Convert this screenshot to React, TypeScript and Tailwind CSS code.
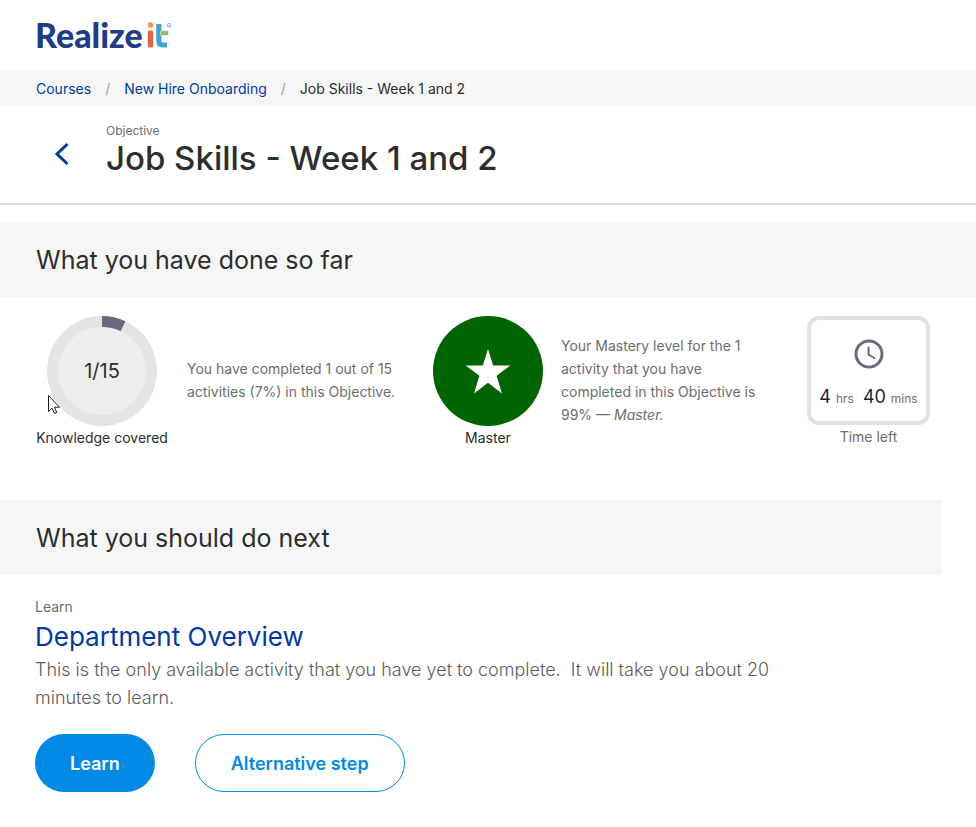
import React from 'react';

const CRUMBS = ['Courses', 'New Hire Onboarding'];

function Logo() {
  return (
    <a href="#" aria-label="Realizeit" className="flex items-center text-[#1f3c88]">
      <span className="font-['Lato',sans-serif] text-[34px] leading-9 font-black">Realize</span>
      <svg width="32" height="30" viewBox="0 0 32 30" aria-hidden="true">
        <circle cx="7.5" cy="5" r="2.8" fill="#f2994a" />
        <rect x="4.8" y="10.6" width="5.4" height="17" rx="1.5" fill="#e8633f" />
        {/* Blue upright with its foot, green cross bar */}
        <path d="M15.8 4V20.5Q15.8 25 20 25H24" fill="none" stroke="#3fa3d6" strokeWidth="5.2" />
        <rect x="17.5" y="10.6" width="8.2" height="5" rx="1.5" fill="#8cc152" stroke="#fff" strokeWidth="0.6" />
        <circle cx="26" cy="5.4" r="2" fill="none" stroke="#3fa3d6" strokeWidth="0.7" />
        <circle cx="26" cy="5.4" r="0.7" fill="#3fa3d6" />
      </svg>
    </a>
  );
}

function Breadcrumbs() {
  return (
    <nav aria-label="Breadcrumb" className="bg-[#f6f6f6] px-9">
      <ol className="flex h-9 items-center gap-[14px] text-[14px]">
        {CRUMBS.map((c) => (
          <React.Fragment key={c}>
            <li>
              <a href="#" className="text-[#0039a6] hover:underline">{c}</a>
            </li>
            <li aria-hidden="true" className="text-[#a0a0a0]">/</li>
          </React.Fragment>
        ))}
        <li>Job Skills - Week 1 and 2</li>
      </ol>
    </nav>
  );
}

function SectionTitle({ children }: { children: React.ReactNode }) {
  return (
    <div className="flex h-[75px] items-center bg-[#f6f6f6] px-9">
      <h2 className="text-[25px] leading-8">{children}</h2>
    </div>
  );
}

function Progress() {
  return (
    <div className="flex items-start gap-[18px]">
      <div className="flex w-[134px] shrink-0 flex-col items-center">
        <div className="relative">
          <svg width="110" height="110" viewBox="0 0 110 110" aria-hidden="true">
            <circle cx="55" cy="55" r="55" fill="#e4e4e4" />
            <circle cx="55" cy="55" r="44" fill="#ededed" />
            <path d="M55 0A55 55 0 0 1 78.4 5.2L73.7 15.2A44 44 0 0 0 55 11Z" fill="#6b6880" />
          </svg>
          <span className="absolute inset-0 flex items-center justify-center text-[20px]">1/15</span>
          {/* Mouse pointer */}
          <svg className="absolute top-[78px] left-0" width="14" height="21" viewBox="0 0 14 21" aria-hidden="true">
            <path d="M1.5 1.5V17.5L5 14.2L7.6 19.5L9.8 18.4L7.4 13.2H12.5Z" fill="#fff" stroke="#1a1a2e" />
          </svg>
        </div>
        <p className="text-[14px] leading-6 whitespace-nowrap">Knowledge covered</p>
      </div>
      <p className="mt-[41px] w-[216px] text-[14px] leading-[23px] text-[#6e6e6e]">
        You have completed 1 out of 15 activities (7%) in this Objective.
      </p>
    </div>
  );
}

function Mastery() {
  return (
    <div className="flex items-start gap-[18px]">
      <div className="flex shrink-0 flex-col items-center">
        <svg width="110" height="110" viewBox="0 0 110 110" aria-hidden="true">
          <circle cx="55" cy="55" r="55" fill="#006400" />
          <path d="M55 33L60.2 49.4H77.4L63.6 59.8L69 77.4L55 66.8L41 77.4L46.4 59.8L32.6 49.4H49.8Z" fill="#fff" />
        </svg>
        <p className="text-[14px] leading-6">Master</p>
      </div>
      <p className="mt-[18px] w-[208px] text-[14px] leading-[23px] text-[#6e6e6e]">
        Your Mastery level for the 1 activity that you have completed in this Objective is 99% — <em>Master.</em>
      </p>
    </div>
  );
}

function TimeLeft() {
  return (
    <div className="ml-auto flex flex-col items-center">
      <div className="flex h-[109px] w-[123px] flex-col items-center rounded-xl border-4 border-[#e1e1e6] pt-[19px]">
        <svg width="30" height="30" viewBox="0 0 30 30" fill="none" stroke="#6b6880" aria-hidden="true">
          <circle cx="15" cy="15" r="13" strokeWidth="3" />
          <path d="M14.5 7.5V15.5L21 19.5" strokeWidth="2" />
        </svg>
        <p className="mt-4 flex items-baseline gap-[5px] text-[12px] leading-6 whitespace-nowrap text-[#6e6e6e]">
          <span className="text-[18px] text-[#1f1f2e]">4</span>
          <span className="mr-1">hrs</span>
          <span className="text-[18px] text-[#1f1f2e]">40</span>
          <span>mins</span>
        </p>
      </div>
      <p className="text-[14px] leading-6 text-[#6e6e6e]">Time left</p>
    </div>
  );
}

export default function App() {
  return (
    <div className="min-h-screen bg-white pb-9 font-['Inter',sans-serif] text-[#2d2d2d]">
      <header className="flex h-[70px] items-center px-[35px]">
        <Logo />
      </header>
      <Breadcrumbs />

      {/* Objective heading */}
      <div className="flex h-[99px] items-start border-b-2 border-[#dedee3] pt-4">
        <button type="button" aria-label="Back" className="mt-5 mr-9 ml-[54px] cursor-pointer">
          <svg width="16" height="24" viewBox="0 0 16 24" fill="none" stroke="#0039a6" strokeWidth="3" aria-hidden="true">
            <path d="M13.5 2L3 12L13.5 22" />
          </svg>
        </button>
        <div>
          <p className="text-[12px] leading-[18px] text-[#6e6e6e]">Objective</p>
          <h1 className="text-[33px] leading-9 font-medium">Job Skills - Week 1 and 2</h1>
        </div>
      </div>

      <main className="mt-[17px]">
        <section>
          <SectionTitle>What you have done so far</SectionTitle>
          <div className="flex items-start gap-[30px] pt-[19px] pr-[46px] pl-[35px]">
            <Progress />
            <Mastery />
            <TimeLeft />
          </div>
        </section>

        <section className="mt-[50px] mr-[34px]">
          <SectionTitle>What you should do next</SectionTitle>
          <div className="px-[35px] pt-5">
            <p className="text-[14px] leading-6 text-[#6e6e6e]">Learn</p>
            <h3 className="text-[26px] leading-9">
              <a href="#" className="text-[#0039a6] hover:underline">Department Overview</a>
            </h3>
            <p className="mt-px max-w-[760px] text-[18px] leading-7 font-light text-[#5c5c5c]">
              This is the only available activity that you have yet to complete.&nbsp; It will take you about 20 minutes to learn.
            </p>
            <div className="mt-[22px] flex gap-10">
              <button type="button" className="h-[58px] rounded-full bg-[#008ae6] px-[35px] text-[18px] font-semibold text-white">Learn</button>
              <button type="button" className="h-[58px] rounded-full border border-[#008ae6] px-[35px] text-[18px] font-semibold text-[#008ae6]">Alternative step</button>
            </div>
          </div>
        </section>
      </main>
    </div>
  );
}
